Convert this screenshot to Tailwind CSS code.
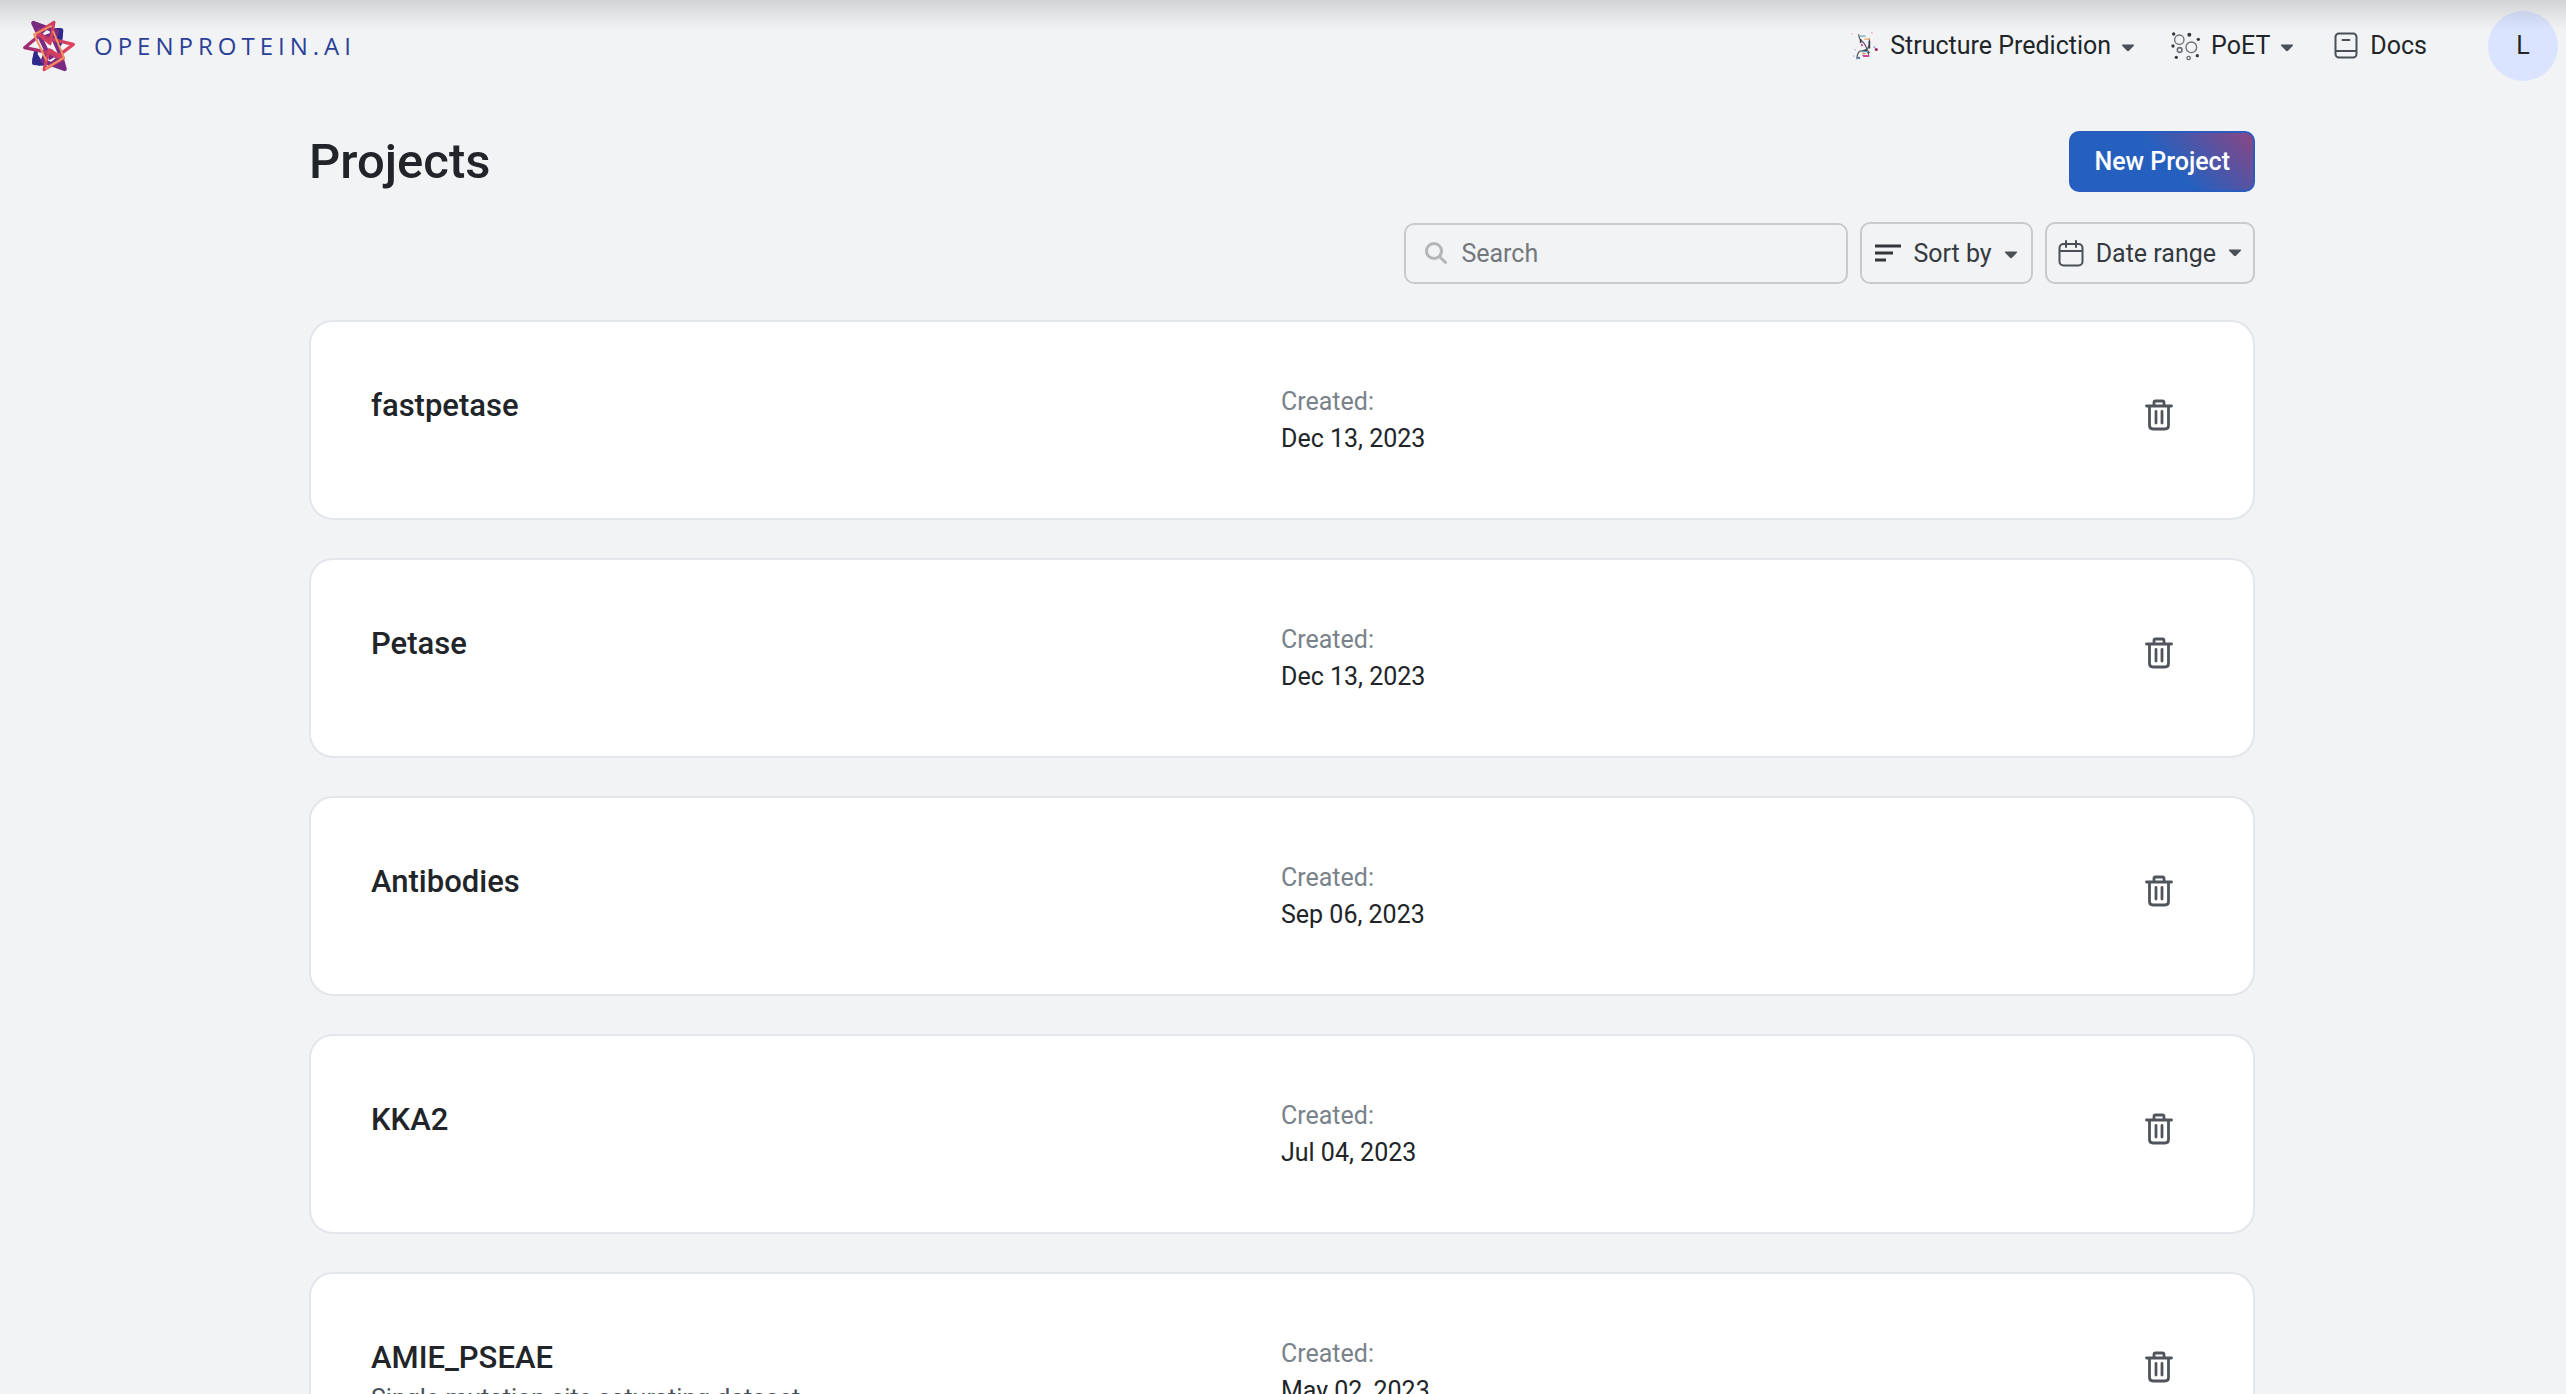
<!DOCTYPE html>
<html lang="en">
<head>
<meta charset="utf-8">
<title>Projects - OpenProtein.AI</title>
<script src="https://cdn.jsdelivr.net/npm/@tailwindcss/browser@4"></script>
</head>
<body class="relative h-screen overflow-hidden bg-[#f1f3f5] pr-[2px] font-['Roboto',sans-serif] text-[25px] leading-[37px] text-[#212529]">
<svg class="hidden" aria-hidden="true">
  <symbol id="caret" viewBox="0 0 14 8"><path d="M1.500 0.500h11q1.200 0.300 0.300 1.300L8 6.800q-1 .9-2 0L1.200 1.800q-.9-1 .3-1.300z" fill="#495057"/></symbol>
  <symbol id="trash" viewBox="0 0 28 32"><g fill="none" stroke="#50555c" stroke-width="2.800" stroke-linecap="round"><path d="M1.500 7h25M9 6.500V3.500Q9 2 10.500 2h7Q19 2 19 3.500v3M4.500 7.500v19Q4.500 30 8 30h12q3.500 0 3.500-3.500v-19"/><path d="M11 12.500v11.500M17 12.500v11.500"/></g></symbol>
</svg>

<header class="flex h-[91px] items-center justify-between pr-1.5 pl-[22px]">
  <a href="#" class="flex items-center gap-[18px] text-[#2b3f97]">
    <svg class="size-[54px]" viewBox="18 20 162 162" fill="none" stroke-linejoin="round" stroke-linecap="round" aria-hidden="true">
      <defs>
        <linearGradient id="lg-red" x1="0" y1="0" x2="1" y2="0"><stop offset="0" stop-color="#9b2a73"/><stop offset="1" stop-color="#e0475c"/></linearGradient>
      </defs>
      <path d="M100 50l28-3q16 0 13 16l-4 34-12 12-20-30zM56 112l26 40-10 8-20-4q-6-6-2-22z" fill="#2f2a8c"/>
      <path d="M112 54l24 0-4 34M60 118l-6 34 26 2" stroke="#2f2a8c" stroke-width="12"/>
      <path d="M52 32l72 26-10 24 20 46 12 42-66-24 12-30-26-54z" stroke="#7b2b82" stroke-width="13"/>
      <path d="M58 36l40 12-20 18zM142 164l-38-14 22-18z" fill="#7b2b82"/>
      <path d="M80 70l22-8 12 20-16 10zM90 120l18-10 14 20-22 14z" fill="#7b2b82"/>
      <path d="M26 106l48-40 14 10 84 20-50 38-18-12z" stroke="url(#lg-red)" stroke-width="10"/>
      <path d="M114 30l-50 32 38 32 12-64zM84 172l58-34-42-26z" stroke="#d5405f" stroke-width="9"/>
      <path d="M104 42l-50 24 36 76M112 58l32 78-54 32" stroke="#f2915f" stroke-width="6"/>
    </svg>
    <span class="font-['Open_Sans',sans-serif] text-2xl tracking-[5px]">OPENPROTEIN.AI</span>
  </a>
  <nav class="flex items-center">
    <button type="button" aria-haspopup="menu" class="flex items-center gap-2.5">
      <svg class="h-8 w-[30px]" viewBox="10 16 96 100" fill="none" stroke-width="4" aria-hidden="true">
        <path d="M38 28q0 14 10 22t14 20 8 24M72 42q2 20-4 30T42 82q-10 8-10 26M50 96l20 2" stroke="#555b61"/>
        <path d="M44 44v12M50 84q14-8 22 4M72 50v24" stroke="#343a40" stroke-width="5"/>
        <path d="M42 34h18M46 84h22" stroke="#74a9c4"/><path d="M56 44h18" stroke="#e8a35c"/>
        <path d="M46 60l4 6M52 98h20" stroke="#d6409f" stroke-width="6"/><path d="M34 102l8 4" stroke="#4263b8" stroke-width="6"/><path d="M50 90h10" stroke="#e8804c"/>
        <g stroke="none"><circle cx="16" cy="27" r="3" fill="#f3c1d8"/><circle cx="80" cy="24" r="3" fill="#efb0cf"/><circle cx="94" cy="77" r="5" fill="#9c2470"/><circle cx="88" cy="70" r="3" fill="#8aa4e0"/><circle cx="27" cy="78" r="3" fill="#cdbcf2"/><circle cx="22" cy="98" r="3" fill="#c9c2f3"/></g>
      </svg>
      <span>Structure Prediction</span><svg class="mt-1 h-2 w-[14px]" aria-hidden="true"><use href="#caret"/></svg>
    </button>
    <button type="button" aria-haspopup="menu" class="ml-9 flex items-center gap-2.5">
      <svg class="size-[30px]" viewBox="27 31 90 90" fill="none" stroke="#6a6f74" stroke-width="4" aria-hidden="true">
        <circle cx="52" cy="57" r="14"/><circle cx="88" cy="80" r="16"/><circle cx="53" cy="88" r="7" stroke-width="5"/><circle cx="80" cy="112" r="5"/>
        <g fill="#343a40" stroke="none"><circle cx="35" cy="40" r="5"/><circle cx="82" cy="42" r="6"/><circle cx="109" cy="56" r="5"/><circle cx="33" cy="76" r="5"/><circle cx="43" cy="110" r="5"/><circle cx="106" cy="105" r="5"/></g>
      </svg>
      <span>PoET</span><svg class="mt-1 h-2 w-[14px]" aria-hidden="true"><use href="#caret"/></svg>
    </button>
    <a href="#" class="ml-10 flex items-center gap-3">
      <svg class="h-[27px] w-6" viewBox="0 0 24 27" fill="none" stroke="#495057" stroke-width="2" stroke-linecap="round" aria-hidden="true"><rect x="1.500" y="1.500" width="21" height="24" rx="3.500"/><path d="M2 19h20M8.500 8h7"/></svg>
      <span>Docs</span>
    </a>
    <button type="button" aria-label="Account" class="ml-[61px] size-[70px] rounded-full bg-[#dbe4ff]">L</button>
  </nav>
</header>

<main class="mx-auto max-w-[1946px]">
  <div class="mt-10 flex items-center justify-between">
    <h1 class="text-[49px] font-medium">Projects</h1>
    <button type="button" class="rounded-[10px] border-2 border-[#2a5cc0] bg-[linear-gradient(45deg,#2660be_53%,#8a4684_100%)] px-[23px] py-[10px] font-medium text-white">New Project</button>
  </div>

  <div class="mt-[30px] flex items-center justify-end gap-3">
    <label class="flex h-[61px] w-[444px] items-center gap-3.5 rounded-[10px] border-2 border-[#c8cacd] px-[19px]">
      <svg class="size-[22px] shrink-0" viewBox="0 0 22 22" fill="none" stroke="#b4b7ba" stroke-width="3" stroke-linecap="round" aria-hidden="true"><circle cx="9" cy="9" r="7.500"/><path d="M14.500 14.500l6 6"/></svg>
      <input type="search" aria-label="Search" placeholder="Search" class="min-w-0 flex-1 bg-transparent outline-none placeholder:text-[#74787c]">
    </label>
    <button type="button" aria-haspopup="menu" class="flex h-[62px] items-center gap-3 rounded-[10px] border-2 border-[#c8cacd] px-[13px] text-[#343a40]">
      <svg class="h-5 w-[26px]" viewBox="0 0 26 20" fill="none" stroke="#33373b" stroke-width="3" aria-hidden="true"><path d="M0 3h26M0 10h18M0 17h11"/></svg>
      <span>Sort by</span><svg class="mt-1 h-2 w-[14px]" aria-hidden="true"><use href="#caret"/></svg>
    </button>
    <button type="button" aria-haspopup="dialog" class="flex h-[62px] items-center gap-3 rounded-[10px] border-2 border-[#c8cacd] px-[11px] text-[#343a40]">
      <svg class="h-[27px] w-[26px]" viewBox="0 0 26 27" fill="none" stroke="#495057" stroke-width="2" stroke-linecap="round" aria-hidden="true"><rect x="1.500" y="4" width="23" height="21.500" rx="4"/><path d="M2 11h22M8 1v6M18 1v6"/></svg>
      <span>Date range</span><svg class="h-2 w-[14px]" aria-hidden="true"><use href="#caret"/></svg>
    </button>
  </div>

  <ul class="mt-9 flex flex-col gap-[38px]">
    <li class="grid min-h-[200px] grid-cols-[910px_1fr_auto] items-start rounded-3xl border-2 border-[#e3e6ea] bg-white py-[61px] pr-20 pl-[60px]">
      <h2 class="text-[31px] leading-[45px] font-medium">fastpetase</h2>
      <dl><dt class="text-[#79828a]">Created:</dt><dd>Dec 13, 2023</dd></dl>
      <button type="button" aria-label="Delete fastpetase" class="mt-4"><svg class="h-8 w-7"><use href="#trash"/></svg></button>
    </li>
    <li class="grid min-h-[200px] grid-cols-[910px_1fr_auto] items-start rounded-3xl border-2 border-[#e3e6ea] bg-white py-[61px] pr-20 pl-[60px]">
      <h2 class="text-[31px] leading-[45px] font-medium">Petase</h2>
      <dl><dt class="text-[#79828a]">Created:</dt><dd>Dec 13, 2023</dd></dl>
      <button type="button" aria-label="Delete Petase" class="mt-4"><svg class="h-8 w-7"><use href="#trash"/></svg></button>
    </li>
    <li class="grid min-h-[200px] grid-cols-[910px_1fr_auto] items-start rounded-3xl border-2 border-[#e3e6ea] bg-white py-[61px] pr-20 pl-[60px]">
      <h2 class="text-[31px] leading-[45px] font-medium">Antibodies</h2>
      <dl><dt class="text-[#79828a]">Created:</dt><dd>Sep 06, 2023</dd></dl>
      <button type="button" aria-label="Delete Antibodies" class="mt-4"><svg class="h-8 w-7"><use href="#trash"/></svg></button>
    </li>
    <li class="grid min-h-[200px] grid-cols-[910px_1fr_auto] items-start rounded-3xl border-2 border-[#e3e6ea] bg-white py-[61px] pr-20 pl-[60px]">
      <h2 class="text-[31px] leading-[45px] font-medium">KKA2</h2>
      <dl><dt class="text-[#79828a]">Created:</dt><dd>Jul 04, 2023</dd></dl>
      <button type="button" aria-label="Delete KKA2" class="mt-4"><svg class="h-8 w-7"><use href="#trash"/></svg></button>
    </li>
    <li class="grid min-h-[200px] grid-cols-[910px_1fr_auto] items-start rounded-3xl border-2 border-[#e3e6ea] bg-white py-[61px] pr-20 pl-[60px]">
      <div>
        <h2 class="text-[31px] leading-[45px] font-medium">AMIE_PSEAE</h2>
        <p class="text-[#495057]">Single mutation site saturating dataset</p>
      </div>
      <dl><dt class="text-[#79828a]">Created:</dt><dd>May 02, 2023</dd></dl>
      <button type="button" aria-label="Delete AMIE_PSEAE" class="mt-4"><svg class="h-8 w-7"><use href="#trash"/></svg></button>
    </li>
  </ul>
</main>
<div class="pointer-events-none absolute inset-x-0 top-0 h-[30px] bg-linear-to-b from-black/13 to-transparent"></div>
</body>
</html>
